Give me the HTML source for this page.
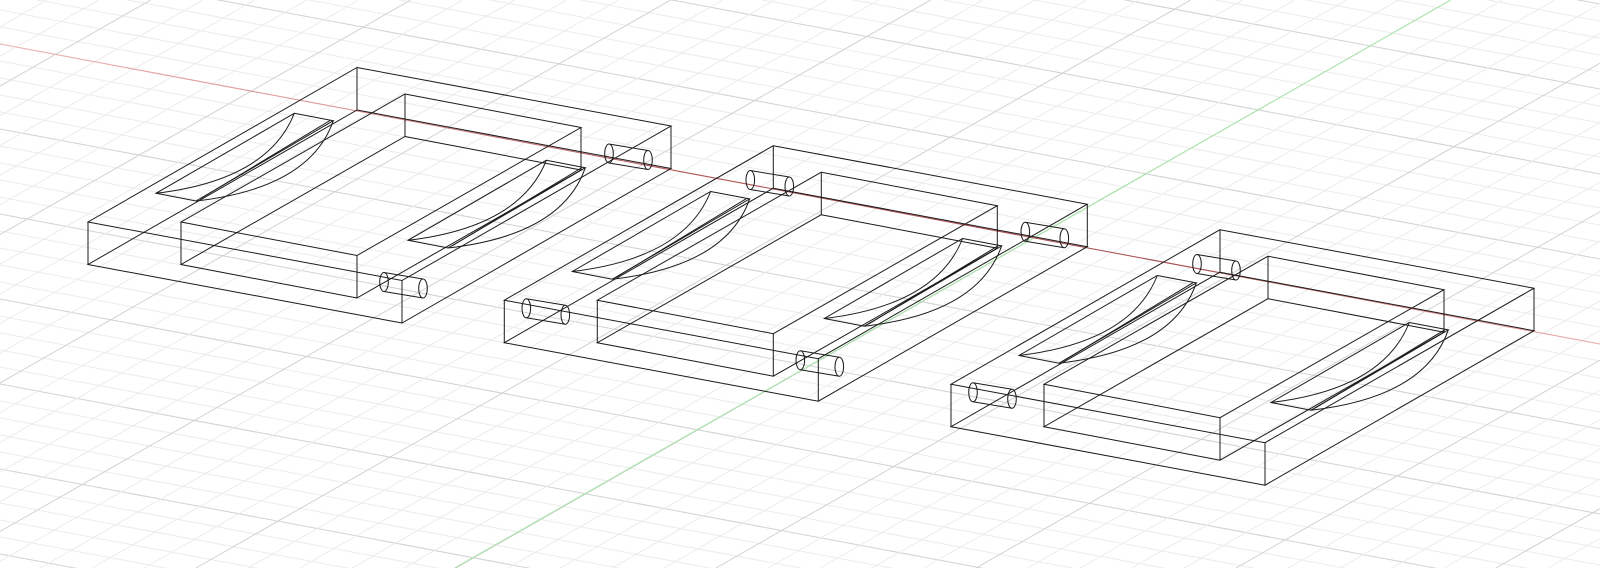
<!DOCTYPE html>
<html><head><meta charset="utf-8"><style>
html,body{margin:0;padding:0;background:#fff;width:1600px;height:568px;overflow:hidden;}
svg{display:block;overflow:hidden;}
</style></head><body>
<svg width="1600" height="568" viewBox="0 0 1600 568" xmlns="http://www.w3.org/2000/svg">
<defs>
  <linearGradient id="rg" x1="0" y1="0" x2="1600" y2="0" gradientUnits="userSpaceOnUse">
    <stop offset="0" stop-color="#f0b4b4"/>
    <stop offset="0.22" stop-color="#e09090"/>
    <stop offset="0.4" stop-color="#b85858"/>
    <stop offset="0.75" stop-color="#a84a4a"/>
    <stop offset="0.9" stop-color="#d88080"/>
    <stop offset="1" stop-color="#f2b0b0"/>
  </linearGradient>
  <g id="h5">
    <line x1="0" y1="0" x2="1600" y2="300" stroke="#d2d2d2"/>
    <line x1="0" y1="17" x2="1600" y2="317" stroke="#ececec"/>
    <line x1="0" y1="34" x2="1600" y2="334" stroke="#ececec"/>
    <line x1="0" y1="51" x2="1600" y2="351" stroke="#ececec"/>
    <line x1="0" y1="68" x2="1600" y2="368" stroke="#ececec"/>
  </g>
  <g id="v5">
    <line x1="0" y1="0" x2="-994.7" y2="568" stroke="#d2d2d2"/>
    <line x1="52" y1="0" x2="-942.7" y2="568" stroke="#ececec"/>
    <line x1="104" y1="0" x2="-890.7" y2="568" stroke="#ececec"/>
    <line x1="156" y1="0" x2="-838.7" y2="568" stroke="#ececec"/>
    <line x1="208" y1="0" x2="-786.7" y2="568" stroke="#ececec"/>
  </g>
  <g id="slot">
    <path d="M-62.7,45.8 L-23.7,53.2 L-161,133.5 L-201,125.8 Z"/>
    <path d="M-62.7,45.8 Q-89,112.5 -201,125.8"/>
    <path d="M-23.7,53.2 Q-47,120.5 -161,133.5"/>
    <path d="M-27,53 L-157,131.5"/>
  </g>
  <g id="box">
    <path d="M0,0 L314,58.5 L45,213 L-269,154.5 Z"/>
    <path d="M0,42.5 L314,101 L45,255.5 L-269,197 Z"/>
    <path d="M0,0 V42.5 M314,58.5 V101 M45,213 V255.5 M-269,154.5 V197"/>
    <path d="M48,26.5 L224,60 L0,188 L-176,154.5 Z"/>
    <path d="M48,69 L224,102.5 L0,230.5 L-176,197 Z"/>
    <path d="M48,26.5 V69 M224,60 V102.5 M0,188 V230.5 M-176,154.5 V197"/>
    <use href="#slot"/>
    <use href="#slot" transform="translate(252,47)"/>
  </g>
  <g id="cyl">
    <ellipse cx="0" cy="0" rx="4.3" ry="9.5"/>
    <ellipse cx="39" cy="6.5" rx="4.3" ry="9.5"/>
    <path d="M0,-9.5 L39,-3 M0,9.5 L39,16"/>
  </g>
</defs>
<rect width="1600" height="568" fill="#fff"/>
<g stroke-width="1" fill="none">
  <use href="#h5" transform="translate(0,-296)"/>
  <use href="#h5" transform="translate(0,-211)"/>
  <use href="#h5" transform="translate(0,-126)"/>
  <use href="#h5" transform="translate(0,-41)"/>
  <use href="#h5" transform="translate(0,44)"/>
  <use href="#h5" transform="translate(0,129)"/>
  <use href="#h5" transform="translate(0,214)"/>
  <use href="#h5" transform="translate(0,299)"/>
  <use href="#h5" transform="translate(0,384)"/>
  <use href="#h5" transform="translate(0,469)"/>
  <use href="#h5" transform="translate(0,554)"/>
  <use href="#v5" transform="translate(-109.3,0)"/>
  <use href="#v5" transform="translate(150.7,0)"/>
  <use href="#v5" transform="translate(410.7,0)"/>
  <use href="#v5" transform="translate(670.7,0)"/>
  <use href="#v5" transform="translate(930.7,0)"/>
  <use href="#v5" transform="translate(1190.7,0)"/>
  <use href="#v5" transform="translate(1450.7,0)"/>
  <use href="#v5" transform="translate(1710.7,0)"/>
  <use href="#v5" transform="translate(1970.7,0)"/>
  <use href="#v5" transform="translate(2230.7,0)"/>
  <use href="#v5" transform="translate(2490.7,0)"/>
</g>
<line x1="1450.7" y1="0" x2="454.6" y2="568" stroke="#a6e6a6" stroke-width="1"/>
<line x1="0" y1="44" x2="1600" y2="344" stroke="url(#rg)" stroke-width="1"/>
<g stroke="#1c1c1c" stroke-width="1" fill="none">
  <g transform="translate(357,67.5)">
    <use href="#box"/>
    <use href="#cyl" transform="translate(27,214.5)"/>
    <use href="#cyl" transform="translate(252,86)"/>
  </g>
  <g transform="translate(773.3,145.7)">
    <use href="#box"/>
    <use href="#cyl" transform="translate(27,214.5)"/>
    <use href="#cyl" transform="translate(252,86)"/>
    <use href="#cyl" transform="translate(-247,162.6)"/>
    <use href="#cyl" transform="translate(-23,34.3)"/>
  </g>
  <g transform="translate(1220,229.7)">
    <use href="#box"/>
    <use href="#cyl" transform="translate(-247,162.6)"/>
    <use href="#cyl" transform="translate(-23,34.3)"/>
  </g>
</g>
</svg>
</body></html>
